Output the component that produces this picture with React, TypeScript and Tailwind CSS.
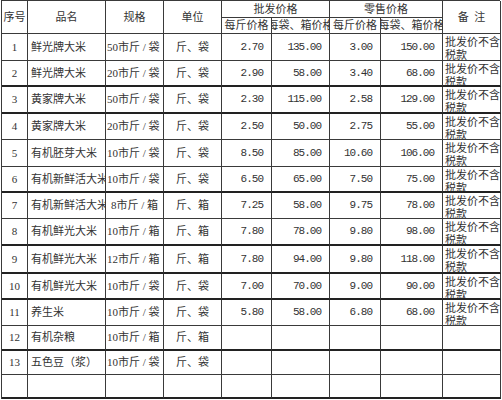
const rows: { n: string; name: string; spec: string; unit: string; p1: string; p2: string; p3: string; p4: string; note: boolean; h: string; thick: boolean }[] = [
  { n: '1', name: '鲜光牌大米', spec: '50市斤 / 袋', unit: '斤、袋', p1: '2.70', p2: '135.00', p3: '3.00', p4: '150.00', note: true, h: 'h-[27px]', thick: false },
  { n: '2', name: '鲜光牌大米', spec: '20市斤 / 袋', unit: '斤、袋', p1: '2.90', p2: '58.00', p3: '3.40', p4: '68.00', note: true, h: 'h-[26px]', thick: true },
  { n: '3', name: '黄家牌大米', spec: '50市斤 / 袋', unit: '斤、袋', p1: '2.30', p2: '115.00', p3: '2.58', p4: '129.00', note: true, h: 'h-[27px]', thick: true },
  { n: '4', name: '黄家牌大米', spec: '20市斤 / 袋', unit: '斤、袋', p1: '2.50', p2: '50.00', p3: '2.75', p4: '55.00', note: true, h: 'h-[26px]', thick: false },
  { n: '5', name: '有机胚芽大米', spec: '10市斤 / 袋', unit: '斤、袋', p1: '8.50', p2: '85.00', p3: '10.60', p4: '106.00', note: true, h: 'h-[27px]', thick: false },
  { n: '6', name: '有机新鲜活大米', spec: '10市斤 / 袋', unit: '斤、袋', p1: '6.50', p2: '65.00', p3: '7.50', p4: '75.00', note: true, h: 'h-[26px]', thick: true },
  { n: '7', name: '有机新鲜活大米', spec: '8市斤 / 箱', unit: '斤、箱', p1: '7.25', p2: '58.00', p3: '9.75', p4: '78.00', note: true, h: 'h-[26px]', thick: false },
  { n: '8', name: '有机鲜光大米', spec: '10市斤 / 箱', unit: '斤、箱', p1: '7.80', p2: '78.00', p3: '9.80', p4: '98.00', note: true, h: 'h-[27px]', thick: true },
  { n: '9', name: '有机鲜光大米', spec: '12市斤 / 箱', unit: '斤、箱', p1: '7.80', p2: '94.00', p3: '9.80', p4: '118.00', note: true, h: 'h-[28px]', thick: true },
  { n: '10', name: '有机鲜光大米', spec: '10市斤 / 袋', unit: '斤、袋', p1: '7.00', p2: '70.00', p3: '9.00', p4: '90.00', note: true, h: 'h-[26px]', thick: true },
  { n: '11', name: '养生米', spec: '10市斤 / 袋', unit: '斤、袋', p1: '5.80', p2: '58.00', p3: '6.80', p4: '68.00', note: true, h: 'h-[26px]', thick: false },
  { n: '12', name: '有机杂粮', spec: '10市斤 / 箱', unit: '斤、箱', p1: '', p2: '', p3: '', p4: '', note: false, h: 'h-[25px]', thick: true },
  { n: '13', name: '五色豆（浆）', spec: '10市斤 / 袋', unit: '斤、袋', p1: '', p2: '', p3: '', p4: '', note: false, h: 'h-[24px]', thick: false },
  { n: '', name: '', spec: '', unit: '', p1: '', p2: '', p3: '', p4: '', note: false, h: 'h-[24px]', thick: true },
];

const cell = 'border-r border-[#3a3a3a] overflow-hidden whitespace-nowrap';

export default function App() {
  return (
    <div className="w-[502px] h-[400px] bg-white text-[#333] text-[11px] font-['Liberation_Serif','Noto_Sans_CJK_SC',serif]">
      <div className="ml-px w-[499px] border-l border-t border-[#3a3a3a] grid grid-cols-[26px_78px_58px_58px_50px_58px_51px_62px_58px]">
        {/* header */}
        <div className={`${cell} row-span-2 h-[33px] border-b flex items-center justify-center`}>序号</div>
        <div className={`${cell} row-span-2 h-[33px] border-b flex items-center justify-center`}>品名</div>
        <div className={`${cell} row-span-2 h-[33px] border-b flex items-center justify-center`}>规格</div>
        <div className={`${cell} row-span-2 h-[33px] border-b flex items-center justify-center`}>单位</div>
        <div className={`${cell} col-span-2 h-[17px] border-b flex items-center justify-center`}>批发价格</div>
        <div className={`${cell} col-span-2 h-[17px] border-b flex items-center justify-center`}>零售价格</div>
        <div className={`${cell} row-span-2 h-[33px] border-b flex items-center justify-center`}>备&nbsp;&nbsp;注</div>
        <div className={`${cell} h-[16px] border-b flex items-center justify-center`}>每斤价格</div>
        <div className={`${cell} h-[16px] border-b flex items-center justify-center`}>每袋、箱价格</div>
        <div className={`${cell} h-[16px] border-b flex items-center justify-center`}>每斤价格</div>
        <div className={`${cell} h-[16px] border-b flex items-center justify-center`}>每袋、箱价格</div>

        {rows.map((r, i) => {
          const b = r.thick ? 'border-b-2 border-b-[#222]' : 'border-b border-b-[#3a3a3a]';
          const num = "font-['Liberation_Mono',monospace] tracking-[-1px] justify-end pr-2";
          return (
            <div key={i} className="contents">
              <div className={`${cell} ${b} ${r.h} flex items-center justify-center`}>{r.n}</div>
              <div className={`${cell} ${b} ${r.h} flex items-center pl-[3px]`}>{r.name}</div>
              <div className={`${cell} ${b} ${r.h} flex items-center ${r.n === '7' ? 'pl-[5px]' : 'pl-px'}`}>{r.spec}</div>
              <div className={`${cell} ${b} ${r.h} flex items-center justify-center`}>{r.unit}</div>
              <div className={`${cell} ${b} ${r.h} flex items-center ${num}`}>{r.p1}</div>
              <div className={`${cell} ${b} ${r.h} flex items-center ${num}`}>{r.p2}</div>
              <div className={`${cell} ${b} ${r.h} flex items-center ${num}`}>{r.p3}</div>
              <div className={`${cell} ${b} ${r.h} flex items-center ${num}`}>{r.p4}</div>
              <div className={`${cell} ${b} ${r.h} pl-[2px] pt-[2px] leading-[13px]`}>
                {r.note && (
                  <>
                    <div>批发价不含</div>
                    <div>税款</div>
                  </>
                )}
              </div>
            </div>
          );
        })}
      </div>
    </div>
  );
}
